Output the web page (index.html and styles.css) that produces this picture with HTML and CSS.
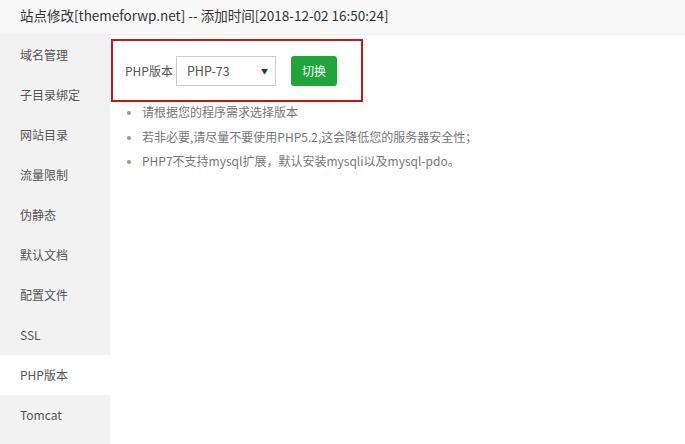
FILE: index.html
```html
<!DOCTYPE html>
<html>
<head>
<meta charset="utf-8">
<link rel="stylesheet" href="styles.css">
</head>
<body>
<div class="header">站点修改[themeforwp.net] -- 添加时间[2018-12-02 16:50:24]</div>
<div class="main">
  <ul class="side">
    <li>域名管理</li>
    <li>子目录绑定</li>
    <li>网站目录</li>
    <li>流量限制</li>
    <li>伪静态</li>
    <li>默认文档</li>
    <li>配置文件</li>
    <li>SSL</li>
    <li class="active">PHP版本</li>
    <li>Tomcat</li>
  </ul>
  <div class="content">
    <div class="box">
      <span class="label">PHP版本</span>
      <div class="select"><span>PHP-73</span><span class="arrow">▼</span></div>
      <button class="btn">切换</button>
    </div>
    <ul class="tips">
      <li>请根据您的程序需求选择版本</li>
      <li>若非必要,请尽量不要使用PHP5.2,这会降低您的服务器安全性；</li>
      <li>PHP7不支持mysql扩展，默认安装mysqli以及mysql-pdo。</li>
    </ul>
  </div>
</div>
</body>
</html>
```
FILE: styles.css
```css
* { box-sizing: border-box; }
html, body { margin: 0; padding: 0; }
body {
  width: 685px;
  height: 444px;
  overflow: hidden;
  background: #fff;
  font-family: "Noto Sans CJK SC", "Noto Sans", sans-serif;
  color: #333;
}
.header {
  height: 35px;
  line-height: 31px;
  padding-left: 20px;
  font-size: 13.5px;
  color: #333;
  background: #f8f8f8;
  border-bottom: 1px solid #eee;
}
.main {
  display: flex;
  height: 409px;
}
.side {
  list-style: none;
  margin: 0;
  padding: 0;
  width: 110px;
  background: #f2f2f2;
  flex-shrink: 0;
}
.side li {
  height: 40px;
  line-height: 40px;
  padding-left: 20px;
  font-size: 12px;
  color: #555;
}
.side li.active {
  background: #fff;
}
.content {
  flex: 1;
  padding: 4px 0 0 1px;
}
.box {
  width: 252px;
  height: 63px;
  border: 2px solid #c4161c;
  display: flex;
  align-items: center;
  padding-left: 12px;
}
.label {
  font-size: 12px;
  color: #555;
  margin-right: 3px;
}
.select {
  width: 100px;
  height: 30px;
  border: 1px solid #ccc;
  display: flex;
  align-items: center;
  justify-content: space-between;
  padding: 0 7px 0 10px;
  font-size: 12.5px;
  color: #555;
  background: #fff;
}
.arrow {
  font-size: 7px;
  color: #333;
}
.btn {
  margin-left: 15px;
  width: 46px;
  height: 30px;
  border: 0;
  border-radius: 3px;
  background: #20a53a;
  color: #fff;
  font-family: inherit;
  font-size: 12px;
  padding: 0;
}
.tips {
  margin: 2px 0 0;
  padding: 0 0 0 14px;
  list-style: none;
}
.tips li {
  position: relative;
  padding-left: 17px;
  height: 24.5px;
  line-height: 16px;
  font-size: 12px;
  color: #777;
}
.tips li::before {
  content: "";
  position: absolute;
  left: 2px;
  top: 7px;
  width: 4px;
  height: 4px;
  border-radius: 50%;
  background: #999;
}
```
